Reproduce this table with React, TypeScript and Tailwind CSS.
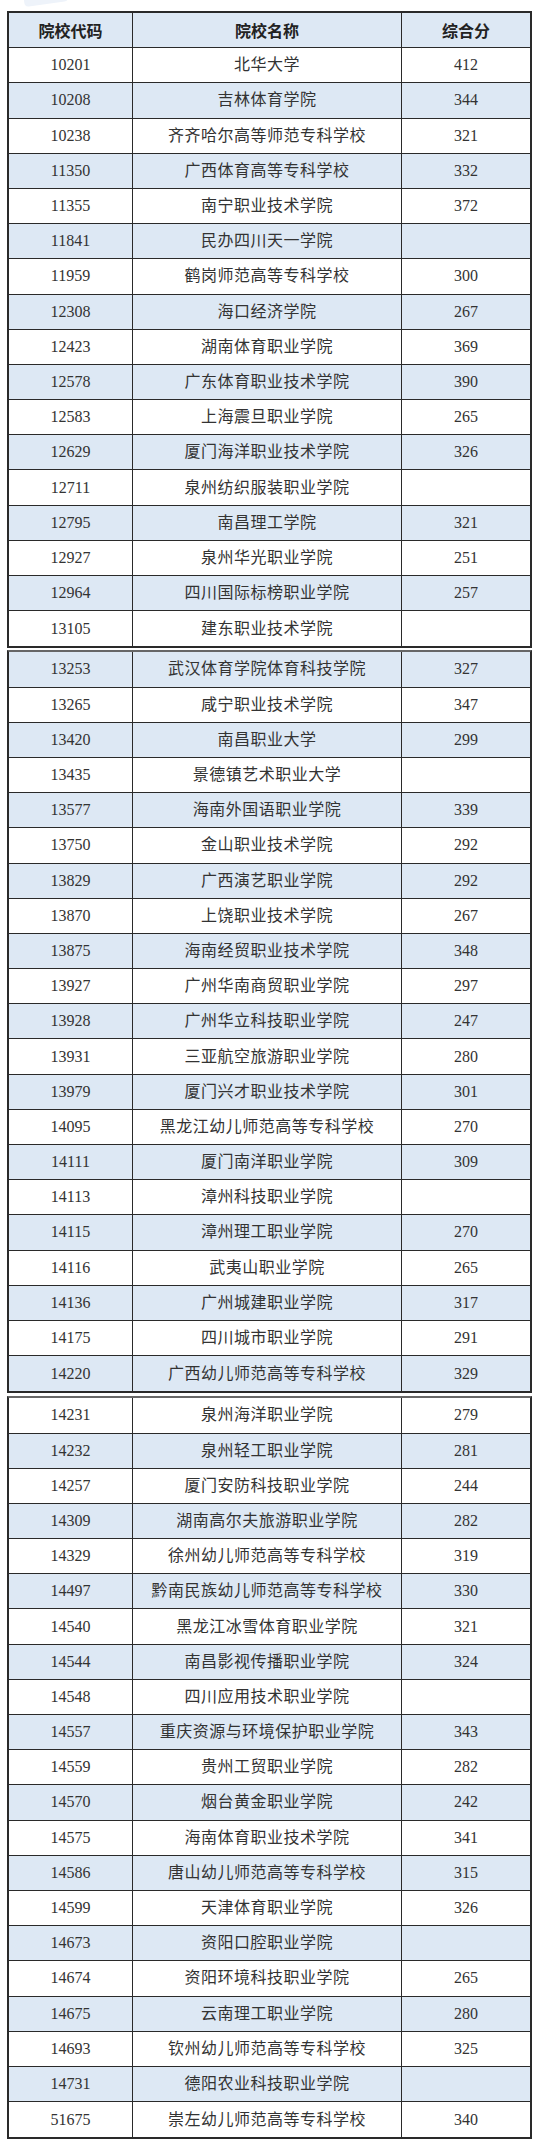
import React from "react";

type Row = [string, string, string];

const seg1: Row[] = [
  ["10201", "北华大学", "412"],
  ["10208", "吉林体育学院", "344"],
  ["10238", "齐齐哈尔高等师范专科学校", "321"],
  ["11350", "广西体育高等专科学校", "332"],
  ["11355", "南宁职业技术学院", "372"],
  ["11841", "民办四川天一学院", ""],
  ["11959", "鹤岗师范高等专科学校", "300"],
  ["12308", "海口经济学院", "267"],
  ["12423", "湖南体育职业学院", "369"],
  ["12578", "广东体育职业技术学院", "390"],
  ["12583", "上海震旦职业学院", "265"],
  ["12629", "厦门海洋职业技术学院", "326"],
  ["12711", "泉州纺织服装职业学院", ""],
  ["12795", "南昌理工学院", "321"],
  ["12927", "泉州华光职业学院", "251"],
  ["12964", "四川国际标榜职业学院", "257"],
  ["13105", "建东职业技术学院", ""],
];

const seg2: Row[] = [
  ["13253", "武汉体育学院体育科技学院", "327"],
  ["13265", "咸宁职业技术学院", "347"],
  ["13420", "南昌职业大学", "299"],
  ["13435", "景德镇艺术职业大学", ""],
  ["13577", "海南外国语职业学院", "339"],
  ["13750", "金山职业技术学院", "292"],
  ["13829", "广西演艺职业学院", "292"],
  ["13870", "上饶职业技术学院", "267"],
  ["13875", "海南经贸职业技术学院", "348"],
  ["13927", "广州华南商贸职业学院", "297"],
  ["13928", "广州华立科技职业学院", "247"],
  ["13931", "三亚航空旅游职业学院", "280"],
  ["13979", "厦门兴才职业技术学院", "301"],
  ["14095", "黑龙江幼儿师范高等专科学校", "270"],
  ["14111", "厦门南洋职业学院", "309"],
  ["14113", "漳州科技职业学院", ""],
  ["14115", "漳州理工职业学院", "270"],
  ["14116", "武夷山职业学院", "265"],
  ["14136", "广州城建职业学院", "317"],
  ["14175", "四川城市职业学院", "291"],
  ["14220", "广西幼儿师范高等专科学校", "329"],
];

const seg3: Row[] = [
  ["14231", "泉州海洋职业学院", "279"],
  ["14232", "泉州轻工职业学院", "281"],
  ["14257", "厦门安防科技职业学院", "244"],
  ["14309", "湖南高尔夫旅游职业学院", "282"],
  ["14329", "徐州幼儿师范高等专科学校", "319"],
  ["14497", "黔南民族幼儿师范高等专科学校", "330"],
  ["14540", "黑龙江冰雪体育职业学院", "321"],
  ["14544", "南昌影视传播职业学院", "324"],
  ["14548", "四川应用技术职业学院", ""],
  ["14557", "重庆资源与环境保护职业学院", "343"],
  ["14559", "贵州工贸职业学院", "282"],
  ["14570", "烟台黄金职业学院", "242"],
  ["14575", "海南体育职业技术学院", "341"],
  ["14586", "唐山幼儿师范高等专科学校", "315"],
  ["14599", "天津体育职业学院", "326"],
  ["14673", "资阳口腔职业学院", ""],
  ["14674", "资阳环境科技职业学院", "265"],
  ["14675", "云南理工职业学院", "280"],
  ["14693", "钦州幼儿师范高等专科学校", "325"],
  ["14731", "德阳农业科技职业学院", ""],
  ["51675", "崇左幼儿师范高等专科学校", "340"],
];

function DataRow({ row, blue, last }: { row: Row; blue: boolean; last: boolean }) {
  return (
    <div
      className={
        "grid grid-cols-[124px_269px_1fr] h-[35.2px] box-border text-[16px] text-[#333] " +
        (blue ? "bg-[#dde8f4] " : "bg-white ") +
        (last ? "" : "border-b border-[#2a2a2a]")
      }
    >
      <div className="flex items-center justify-center border-r border-[#2a2a2a]">{row[0]}</div>
      <div className="flex items-center justify-center border-r border-[#2a2a2a] tracking-[0.5px]">{row[1]}</div>
      <div className="flex items-center justify-center">{row[2]}</div>
    </div>
  );
}

function Segment({ rows, start, header, topClass }: { rows: Row[]; start: number; header?: boolean; topClass: string }) {
  return (
    <div className={"border-2 border-[#2a2a2a] " + topClass}>
      {header && (
        <div
          className="grid grid-cols-[124px_269px_1fr] h-[35.2px] box-border bg-[#dde8f4] border-b border-[#2a2a2a] text-[16px] font-bold text-[#222]"
          style={{ fontFamily: '"Noto Sans CJK SC", sans-serif' }}
        >
          <div className="flex items-center justify-center border-r border-[#2a2a2a]">院校代码</div>
          <div className="flex items-center justify-center border-r border-[#2a2a2a]">院校名称</div>
          <div className="flex items-center justify-center">综合分</div>
        </div>
      )}
      {rows.map((r, i) => (
        <DataRow key={r[0]} row={r} blue={(start + i) % 2 === 0} last={i === rows.length - 1} />
      ))}
    </div>
  );
}

export default function App() {
  return (
    <div
      className="relative w-[540px] h-[2152px] bg-white pt-[11px] pl-[7px] overflow-hidden"
      style={{ fontFamily: '"Liberation Serif", "Noto Sans CJK SC", serif' }}
    >
      <div className="absolute left-[24px] top-[-6px] w-[44px] h-[10px] bg-[#eef3fa] rotate-[-8deg] rounded-sm" />
      <div className="w-[525px] flex flex-col">
        <Segment rows={seg1} start={1} header topClass="" />
        <Segment rows={seg2} start={18} topClass="mt-[2px] border-t-[#666]" />
        <Segment rows={seg3} start={39} topClass="mt-[3px] border-t-[#666]" />
      </div>
    </div>
  );
}
